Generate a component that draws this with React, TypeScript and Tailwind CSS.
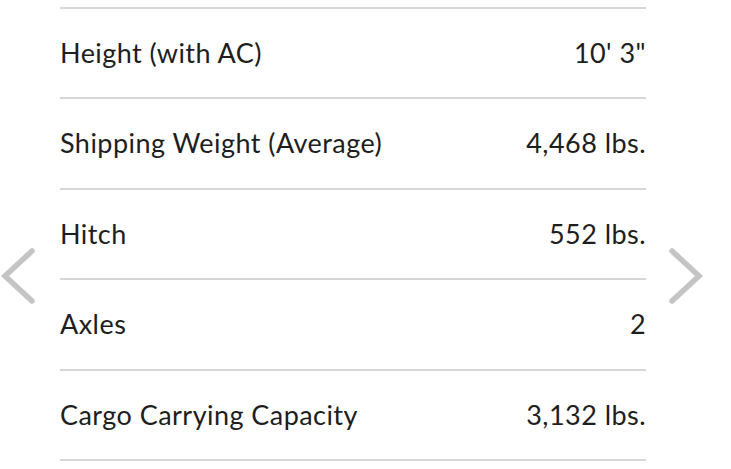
const SPECS = [
  { label: 'Height (with AC)', value: `10' 3"` },
  { label: 'Shipping Weight (Average)', value: '4,468 lbs.' },
  { label: 'Hitch', value: '552 lbs.' },
  { label: 'Axles', value: '2' },
  { label: 'Cargo Carrying Capacity', value: '3,132 lbs.' },
]

function Chevron({ dir }: { dir: 'left' | 'right' }) {
  return (
    <svg width="38" height="56" viewBox="0 0 38 56" className="shrink-0">
      <polyline
        points={dir === 'left' ? '32,3 5,28 32,53' : '6,3 33,28 6,53'}
        fill="none"
        stroke="#c4c4c4"
        strokeWidth="5.5"
        strokeLinecap="round"
        strokeLinejoin="miter"
      />
    </svg>
  )
}

export default function App() {
  return (
    <div className="w-[731px] h-[469px] bg-white overflow-hidden font-['Lato',sans-serif] text-[#1e1e1e]">
      <div className="flex items-start pt-[7px]">
        <div className="w-[60px] pt-[241px]">
          <Chevron dir="left" />
        </div>
        <div className="w-[586px] border-t-2 border-[#d6d6d6]">
          {SPECS.map(s => (
            <div
              key={s.label}
              className="h-[90.4px] flex items-center justify-between border-b-2 border-[#d6d6d6] text-[27px] tracking-[0.45px]"
            >
              <span>{s.label}</span>
              <span>{s.value}</span>
            </div>
          ))}
        </div>
        <div className="pl-[20px] pt-[241px]">
          <Chevron dir="right" />
        </div>
      </div>
    </div>
  )
}
